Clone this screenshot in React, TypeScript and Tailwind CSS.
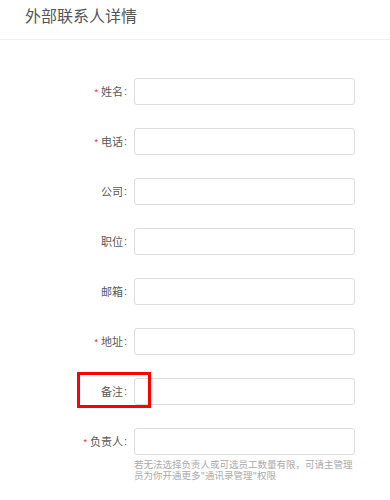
import React from "react";

type Field = { label: string; required: boolean; highlight?: boolean };

const fields: Field[] = [
  { label: "姓名", required: true },
  { label: "电话", required: true },
  { label: "公司", required: false },
  { label: "职位", required: false },
  { label: "邮箱", required: false },
  { label: "地址", required: true },
  { label: "备注", required: false, highlight: true },
  { label: "负责人", required: true },
];

const latin = { fontFamily: '"Liberation Sans", sans-serif' };

export default function App() {
  return (
    <div
      className="w-[390px] h-[500px] bg-white overflow-hidden"
      style={{ fontFamily: '"Noto Sans CJK SC", "Noto Sans", sans-serif' }}
    >
      <div className="h-[40px] border-b border-[#f0f0f0] pl-[25px] pt-[5px]">
        <div className="text-[16px] leading-[20px] text-[#555]">外部联系人详情</div>
      </div>
      <div className="pt-[38px] flex flex-col gap-[23px]">
        {fields.map((f) => (
          <div key={f.label} className="flex flex-col">
            <div className="relative flex items-center h-[27px]">
              <div className="w-[127px] flex items-center justify-end text-[11px] leading-none text-[#595959]">
                {f.required && (
                  <span className="text-[#f5222d] text-[9px] mr-[3px] translate-y-[1px]" style={latin}>
                    *
                  </span>
                )}
                <span>{f.label}</span>
                <span className="ml-[1px]" style={latin}>:</span>
              </div>
              <div className="ml-[7px] w-[221px] h-[27px] border border-[#dcdcdc] rounded-[3px] bg-white" />
              {f.highlight && (
                <div className="absolute left-[77px] top-[-6px] w-[74px] h-[36px] border-[3px] border-[#ff0000]" />
              )}
            </div>
            {f.label === "负责人" && (
              <div className="ml-[134px] w-[222px] mt-[4px] text-[9.5px] leading-[11px] text-[#aaa]">
                若无法选择负责人或可选员工数量有限，可请主管理员为你开通更多"通讯录管理"权限
              </div>
            )}
          </div>
        ))}
      </div>
    </div>
  );
}
